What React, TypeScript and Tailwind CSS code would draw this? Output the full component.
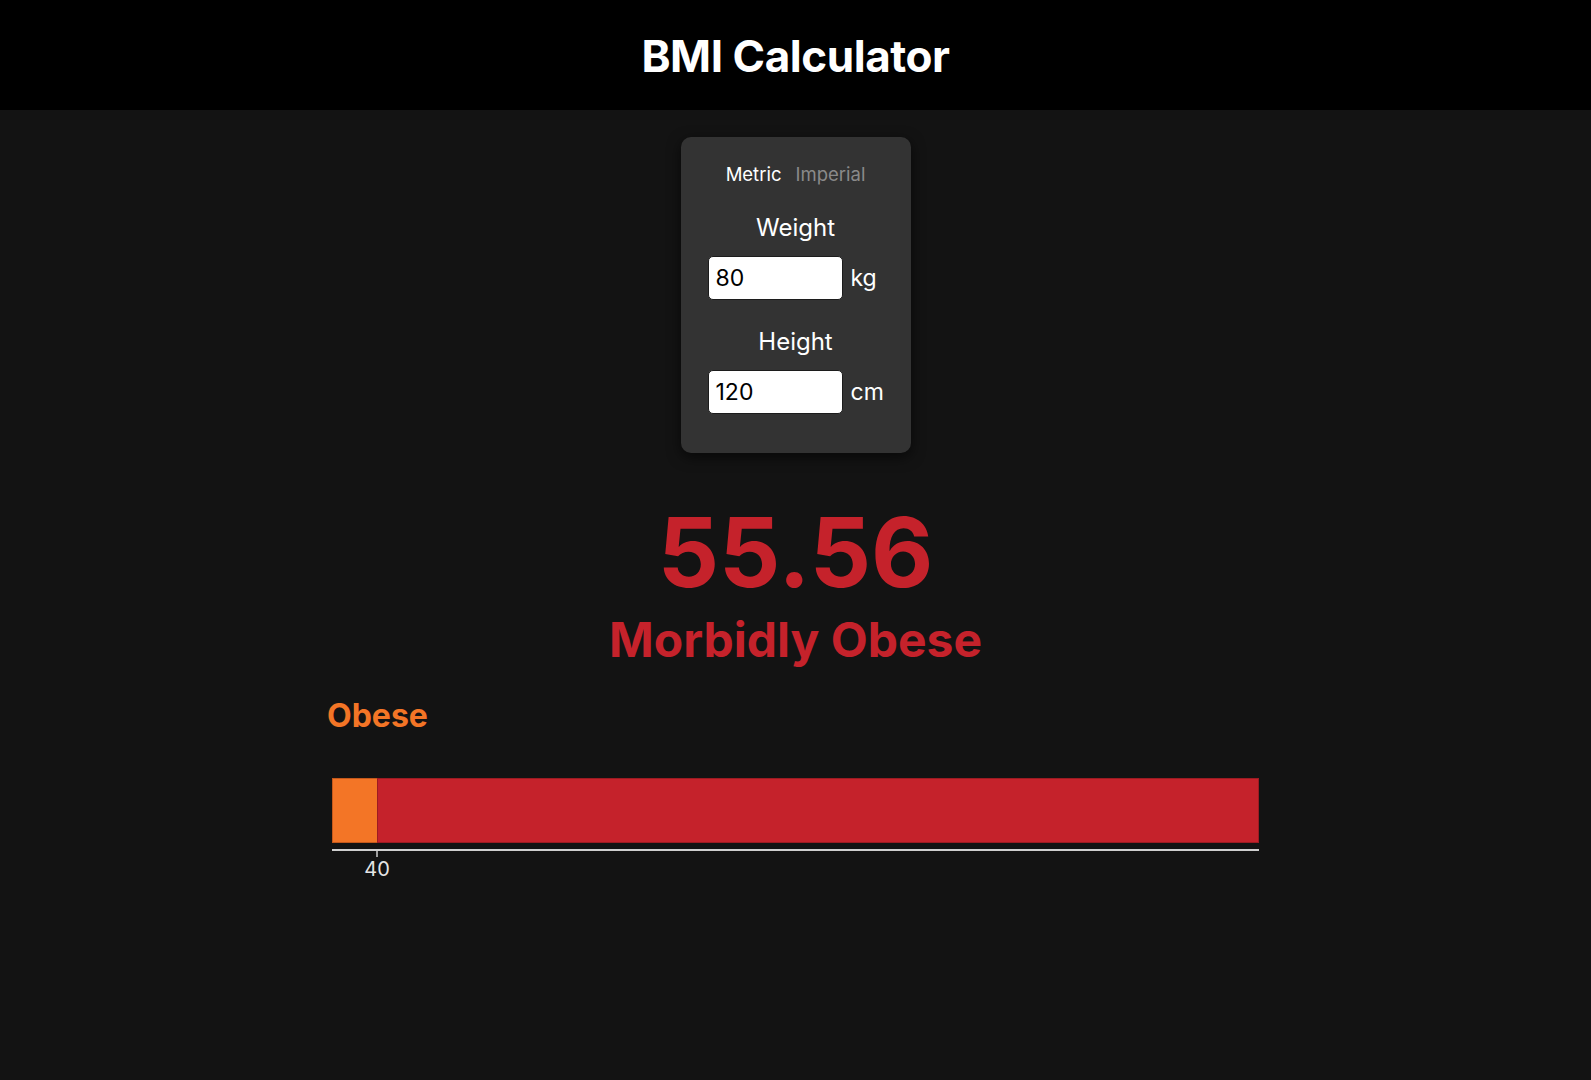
import React from "react";

export default function App() {
  const barW = 927;
  const orangeW = 45;
  return (
    <div
      className="min-h-[1080px] w-full bg-[#131313] text-white"
      style={{ fontFamily: "Inter, 'Noto Sans', sans-serif" }}
    >
      <header className="flex h-[110px] items-center justify-center bg-black">
        <h1 className="mt-[2px] text-[44px] font-bold leading-none tracking-[-0.01em] text-white">BMI Calculator</h1>
      </header>

      <main className="flex flex-col items-center">
        <div className="mt-[27px] flex w-[230px] flex-col items-center rounded-[10px] bg-[#333333] pb-[39px] pt-[23px] shadow-[0_4px_14px_rgba(0,0,0,0.6)]">
          <div className="flex gap-[14px] text-[18.5px] leading-7">
            <span className="text-white">Metric</span>
            <span className="text-[#8a8a8a]">Imperial</span>
          </div>

          <div className="mt-[25px] text-[24px] leading-[30px] text-white">Weight</div>
          <div className="mt-[13px] flex w-full items-center gap-[8px] pl-[27px]">
            <div className="flex h-[44px] w-[135px] items-center rounded-[5px] border border-[#1c1c1c] bg-white px-[7px] text-[23px] text-black">
              80
            </div>
            <span className="text-[23px] text-white">kg</span>
          </div>

          <div className="mt-[27px] text-[24px] leading-[30px] text-white">Height</div>
          <div className="mt-[13px] flex w-full items-center gap-[8px] pl-[27px]">
            <div className="flex h-[44px] w-[135px] items-center rounded-[5px] border border-[#1c1c1c] bg-white px-[7px] text-[23px] text-black">
              120
            </div>
            <span className="text-[23px] text-white">cm</span>
          </div>
        </div>

        <div className="mt-[51px] text-8xl font-bold leading-none text-[#c5222b]">55.56</div>
        <div className="mt-[16px] text-5xl font-bold leading-none text-[#c5222b]">Morbidly Obese</div>

        <div className="mt-[34px] w-[927px]">
          <div className="-ml-[5px] text-[32px] font-bold leading-[36px] text-[#f37526]">Obese</div>
          <svg className="mt-[44px] block overflow-visible" width={barW} height={110} viewBox={`0 0 ${barW} 110`}>
            <rect x={0.5} y={0.5} width={orangeW} height={64} fill="#f37526" stroke="#c4581b" strokeWidth={1} />
            <rect x={orangeW + 0.5} y={0.5} width={barW - orangeW - 1} height={64} fill="#c5222b" stroke="#9c1b22" strokeWidth={1} />
            <line x1={0} y1={72} x2={barW} y2={72} stroke="#cfcfcf" strokeWidth={2} />
            <line x1={orangeW} y1={72} x2={orangeW} y2={79} stroke="#cfcfcf" strokeWidth={1.5} />
            <text x={orangeW} y={98} fill="#e5e5e5" fontSize={20} textAnchor="middle" fontFamily="Inter, sans-serif">
              40
            </text>
          </svg>
        </div>
      </main>
    </div>
  );
}
